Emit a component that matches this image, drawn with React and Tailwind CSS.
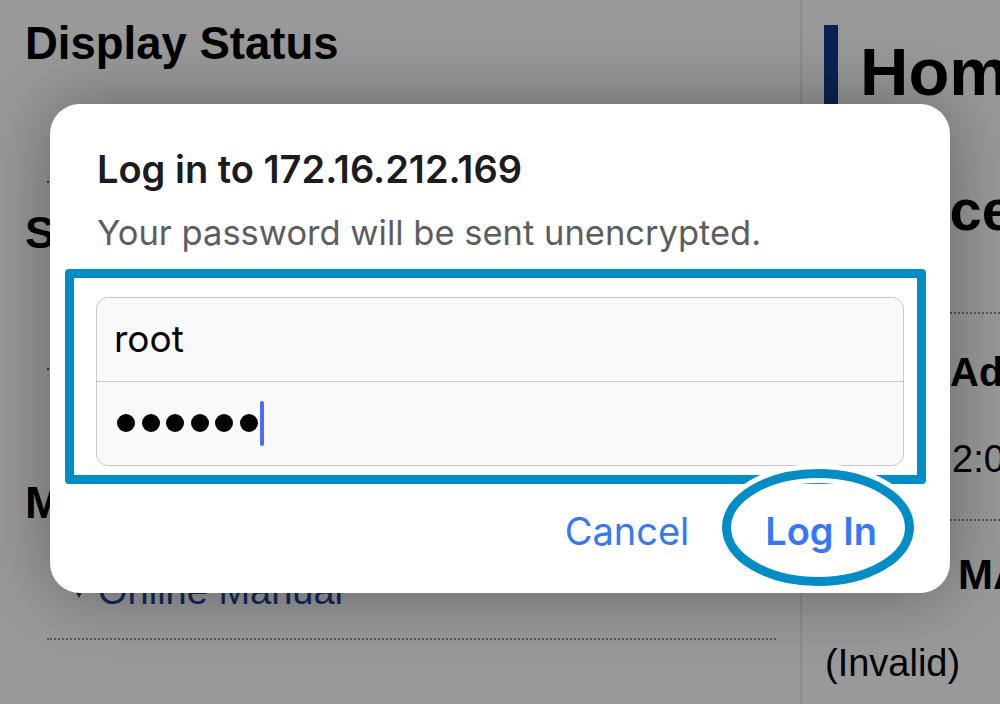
import React from "react";

const SANS = { fontFamily: '"Liberation Sans", Arial, sans-serif' };
const IOS = { fontFamily: 'Inter, "Noto Sans", sans-serif' };

function Dotted({ className = "" }) {
  return <div className={"border-t-2 border-dotted border-[#555] " + className} />;
}

export default function App() {
  return (
    <div className="relative w-[1000px] h-[704px] overflow-hidden bg-[#999999] flex text-black" style={SANS}>
      {/* left column */}
      <div className="w-[800px] shrink-0 flex flex-col pt-[21px] pl-[25px]">
        <div className="text-[45.5px] leading-none font-bold whitespace-nowrap">Display Status</div>
        <div className="mt-[114px] ml-[22px] w-[2px] h-[2px] bg-[#333]" />
        <div className="mt-[27px] text-[45px] leading-none font-bold whitespace-nowrap">System</div>
        <div className="mt-[113px] ml-[22px] w-[2px] h-[2px] bg-[#333]" />
        <div className="mt-[110px] text-[45px] leading-none font-bold whitespace-nowrap">Manuals</div>
        <div className="mt-[47px] flex items-center text-[38px] leading-none whitespace-nowrap text-[#13295c]">
          <span className="ml-[43px] w-[30px] text-[22px]">▼</span>
          <span>Online Manual</span>
        </div>
        <Dotted className="mt-[28px] ml-[22px] w-[729px]" />
      </div>

      {/* right column */}
      <div className="flex-1 min-w-0 border-l-2 border-[#8c8c8c] flex flex-col overflow-hidden">
        <div className="mt-[25px] flex items-start h-[85px]">
          <div className="ml-[22px] w-[14px] h-[85px] shrink-0 bg-[#0b2353]" />
          <div className="ml-[22px] mt-[13px] shrink-0 text-[67px] leading-none font-bold whitespace-nowrap">Home</div>
        </div>
        <div className="mt-[71px] ml-[25px] text-[58px] leading-none font-bold whitespace-nowrap">Device Information</div>
        <Dotted className="mt-[73px] ml-[23px]" />
        <div className="mt-[38px] ml-[148px] text-[40px] leading-none font-bold whitespace-nowrap">Address</div>
        <div className="mt-[48px] ml-[150px] text-[38px] leading-none whitespace-nowrap">2:0C:29:7A:11</div>
        <Dotted className="mt-[41px] ml-[23px]" />
        <div className="mt-[33px] ml-[156px] text-[42px] leading-none font-bold whitespace-nowrap">MAC Address</div>
        <div className="mt-[48px] ml-[23px] text-[38px] leading-none whitespace-nowrap">(Invalid)</div>
      </div>

      {/* dialog */}
      <div
        className="absolute left-[50px] top-[104px] w-[900px] h-[489px] bg-white rounded-[30px] shadow-[0_0_70px_rgba(0,0,0,0.35)] flex flex-col px-[46px] pt-[46px]"
        style={IOS}
      >
        <div className="pl-[1px] text-[38px] leading-none font-semibold text-[#1c1c1e] whitespace-nowrap">Log in to 172.16.212.169</div>
        <div className="mt-[28px] pl-[1px] text-[34.5px] leading-none text-[#5d5d5d] whitespace-nowrap">Your password will be sent unencrypted.</div>
        <div className="mt-[46px] border border-[#c8c8c8] rounded-[12px] bg-[#f9f9f9] flex flex-col">
          <div className="h-[84px] border-b border-[#c8c8c8] flex items-center pl-[17px] text-[37px] text-black">root</div>
          <div className="h-[83px] flex items-center pl-[20px]">
            <div className="flex items-center gap-[6.6px]">
              {[0, 1, 2, 3, 4, 5].map((i) => (
                <div key={i} className="w-[18px] h-[18px] rounded-full bg-black" />
              ))}
            </div>
            <div className="ml-[2px] w-[4px] h-[45px] rounded-full bg-[#4a6cf7]" />
          </div>
        </div>
        <div className="mt-[46px] flex justify-end pr-[27px] gap-[76px] text-[38px] leading-none text-[#3478f6] whitespace-nowrap">
          <span>Cancel</span>
          <span className="font-semibold">Log In</span>
        </div>
      </div>

      {/* annotation: highlight frame */}
      <div className="absolute left-[65px] top-[269px] w-[861px] h-[215px] border-[9px] border-[#008cc4] rounded-[4px]" />

      {/* annotation: ellipse around Log In */}
      <svg className="absolute left-[712px] top-[459px]" width="212" height="138" viewBox="0 0 212 138">
        <ellipse cx="106" cy="68.5" rx="91.5" ry="54" fill="none" stroke="#ffffff" strokeWidth="19" />
        <ellipse cx="106" cy="68.5" rx="91.5" ry="54" fill="none" stroke="#008cc4" strokeWidth="9" />
      </svg>
    </div>
  );
}
